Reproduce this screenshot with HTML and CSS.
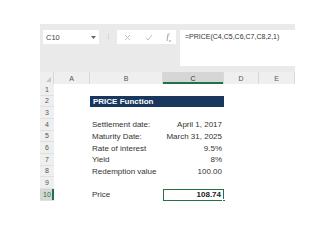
FILE: index.html
```html
<!doctype html>
<html lang="en-us">
  <head>
    <meta charset="utf-8" />
    <meta name="viewport" content="width=device-width" />
    <title>PRICE Function</title>
    <link rel="stylesheet" href="styles.css">
  </head>

  <body>
    <div class="sheet">
      <div class="toolbar">
        <div class="namebox">
          <span>C10</span>
          <svg width="5" height="3" viewBox="0 0 5 3"><path d="M0 0h5L2.5 3z" fill="#666" /></svg>
        </div>
        <div class="dots"><i></i><i></i><i></i></div>
        <div class="funcbox">
          <svg width="7" height="7" viewBox="0 0 7 7"><path d="M1 1l5 5M6 1l-5 5" stroke="#bbb" stroke-width="0.9" /></svg>
          <svg width="8" height="7" viewBox="0 0 8 7"><path d="M1 4l2 2 4-5" stroke="#bbb" stroke-width="0.9" fill="none" /></svg>
          <span class="fx">f<sub>x</sub></span>
        </div>
        <div class="formula">=PRICE(C4,C5,C6,C7,C8,2,1)</div>
      </div>

      <div class="grid">
        <div class="corner"><svg width="5" height="5" viewBox="0 0 5 5"><path d="M5 0v5H0z" fill="#c6c6c6" /></svg></div>
        <div class="colhead">A</div>
        <div class="colhead">B</div>
        <div class="colhead active">C</div>
        <div class="colhead">D</div>
        <div class="colhead">E</div>

        <div class="rowhead">1</div>
        <div></div><div></div><div></div><div></div><div></div>

        <div class="rowhead">2</div>
        <div></div>
        <div class="title">PRICE Function</div>
        <div></div><div></div>

        <div class="rowhead">3</div>
        <div></div><div></div><div></div><div></div><div></div>

        <div class="rowhead">4</div>
        <div></div>
        <div class="label">Settlement date:</div>
        <div class="value">April 1, 2017</div>
        <div></div><div></div>

        <div class="rowhead">5</div>
        <div></div>
        <div class="label">Maturity Date:</div>
        <div class="value">March 31, 2025</div>
        <div></div><div></div>

        <div class="rowhead">6</div>
        <div></div>
        <div class="label">Rate of interest</div>
        <div class="value">9.5%</div>
        <div></div><div></div>

        <div class="rowhead">7</div>
        <div></div>
        <div class="label">Yield</div>
        <div class="value">8%</div>
        <div></div><div></div>

        <div class="rowhead">8</div>
        <div></div>
        <div class="label">Redemption value</div>
        <div class="value">100.00</div>
        <div></div><div></div>

        <div class="rowhead">9</div>
        <div></div><div></div><div></div><div></div><div></div>

        <div class="rowhead active">10</div>
        <div></div>
        <div class="label">Price</div>
        <div class="value selected">108.74</div>
        <div></div><div></div>
      </div>
    </div>
  </body>
</html>
```

FILE: styles.css
```css
body {
  margin: 0;
  background: #fff;
  font-family: "Liberation Sans", Arial, sans-serif;
  color: #333;
}

.sheet {
  margin: 24px 0 0 40px;
  width: 255px;
}

/* formula bar area */
.toolbar {
  display: flex;
  align-items: flex-start;
  height: 48px;
  padding: 6px 0 0 3px;
  box-sizing: border-box;
  background: #eaeaea;
}
.namebox {
  display: flex;
  align-items: center;
  justify-content: space-between;
  width: 56px;
  height: 14px;
  padding: 0 3px 0 3px;
  box-sizing: border-box;
  background: #fff;
  font-size: 7.5px;
  color: #444;
}
.dots {
  display: flex;
  flex-direction: column;
  gap: 1px;
  width: 18px;
  align-items: center;
  padding-top: 4px;
}
.dots i {
  width: 1px;
  height: 1px;
  background: #c4c4c4;
}
.funcbox {
  display: flex;
  align-items: center;
  justify-content: space-between;
  width: 59px;
  height: 14px;
  padding: 0 5px 0 7px;
  box-sizing: border-box;
  background: #fff;
}
.fx {
  font-family: "Liberation Serif", serif;
  font-style: italic;
  font-size: 8px;
  color: #777;
}
.fx sub {
  font-size: 5px;
}
.formula {
  margin-left: 4px;
  width: 115px;
  height: 36px;
  padding: 3px 0 0 5px;
  box-sizing: border-box;
  background: #fff;
  font-size: 7px;
  color: #333;
}

/* cells */
.grid {
  display: grid;
  grid-template-columns: 14px 36px 73px 61px 35px 36px;
  grid-template-rows: 12px repeat(10, 11.67px);
  font-size: 8px;
}
.corner {
  display: flex;
  align-items: flex-end;
  justify-content: flex-end;
  padding: 0 2px 2px 0;
  background: #efefef;
  border-right: 1px solid #d8d8d8;
}
.colhead {
  display: flex;
  align-items: center;
  justify-content: center;
  background: #efefef;
  border-right: 1px solid #d8d8d8;
  font-size: 7px;
  color: #555;
}
.colhead.active {
  background: #d6d6d6;
  box-shadow: inset 0 -2px 0 #217346;
  color: #333;
}
.rowhead {
  display: flex;
  align-items: center;
  justify-content: center;
  background: #efefef;
  border-bottom: 1px solid #e0e0e0;
  font-size: 7px;
  color: #555;
}
.rowhead.active {
  background: #d6d6d6;
  box-shadow: inset -2px 0 0 #217346;
  color: #217346;
}
.title {
  grid-column: span 2;
  display: flex;
  align-items: center;
  padding-left: 3px;
  background: #17375e;
  color: #fff;
  font-weight: bold;
}
.label {
  display: flex;
  align-items: center;
  padding-left: 2px;
}
.value {
  display: flex;
  align-items: center;
  justify-content: flex-end;
  padding-right: 2px;
}
.value.selected {
  position: relative;
  border: 1.5px solid #217346;
  font-weight: bold;
  color: #222;
}
.value.selected::after {
  content: "";
  position: absolute;
  right: -3px;
  bottom: -3px;
  width: 4px;
  height: 4px;
  background: #217346;
  border: 1px solid #fff;
  box-sizing: border-box;
}
```
